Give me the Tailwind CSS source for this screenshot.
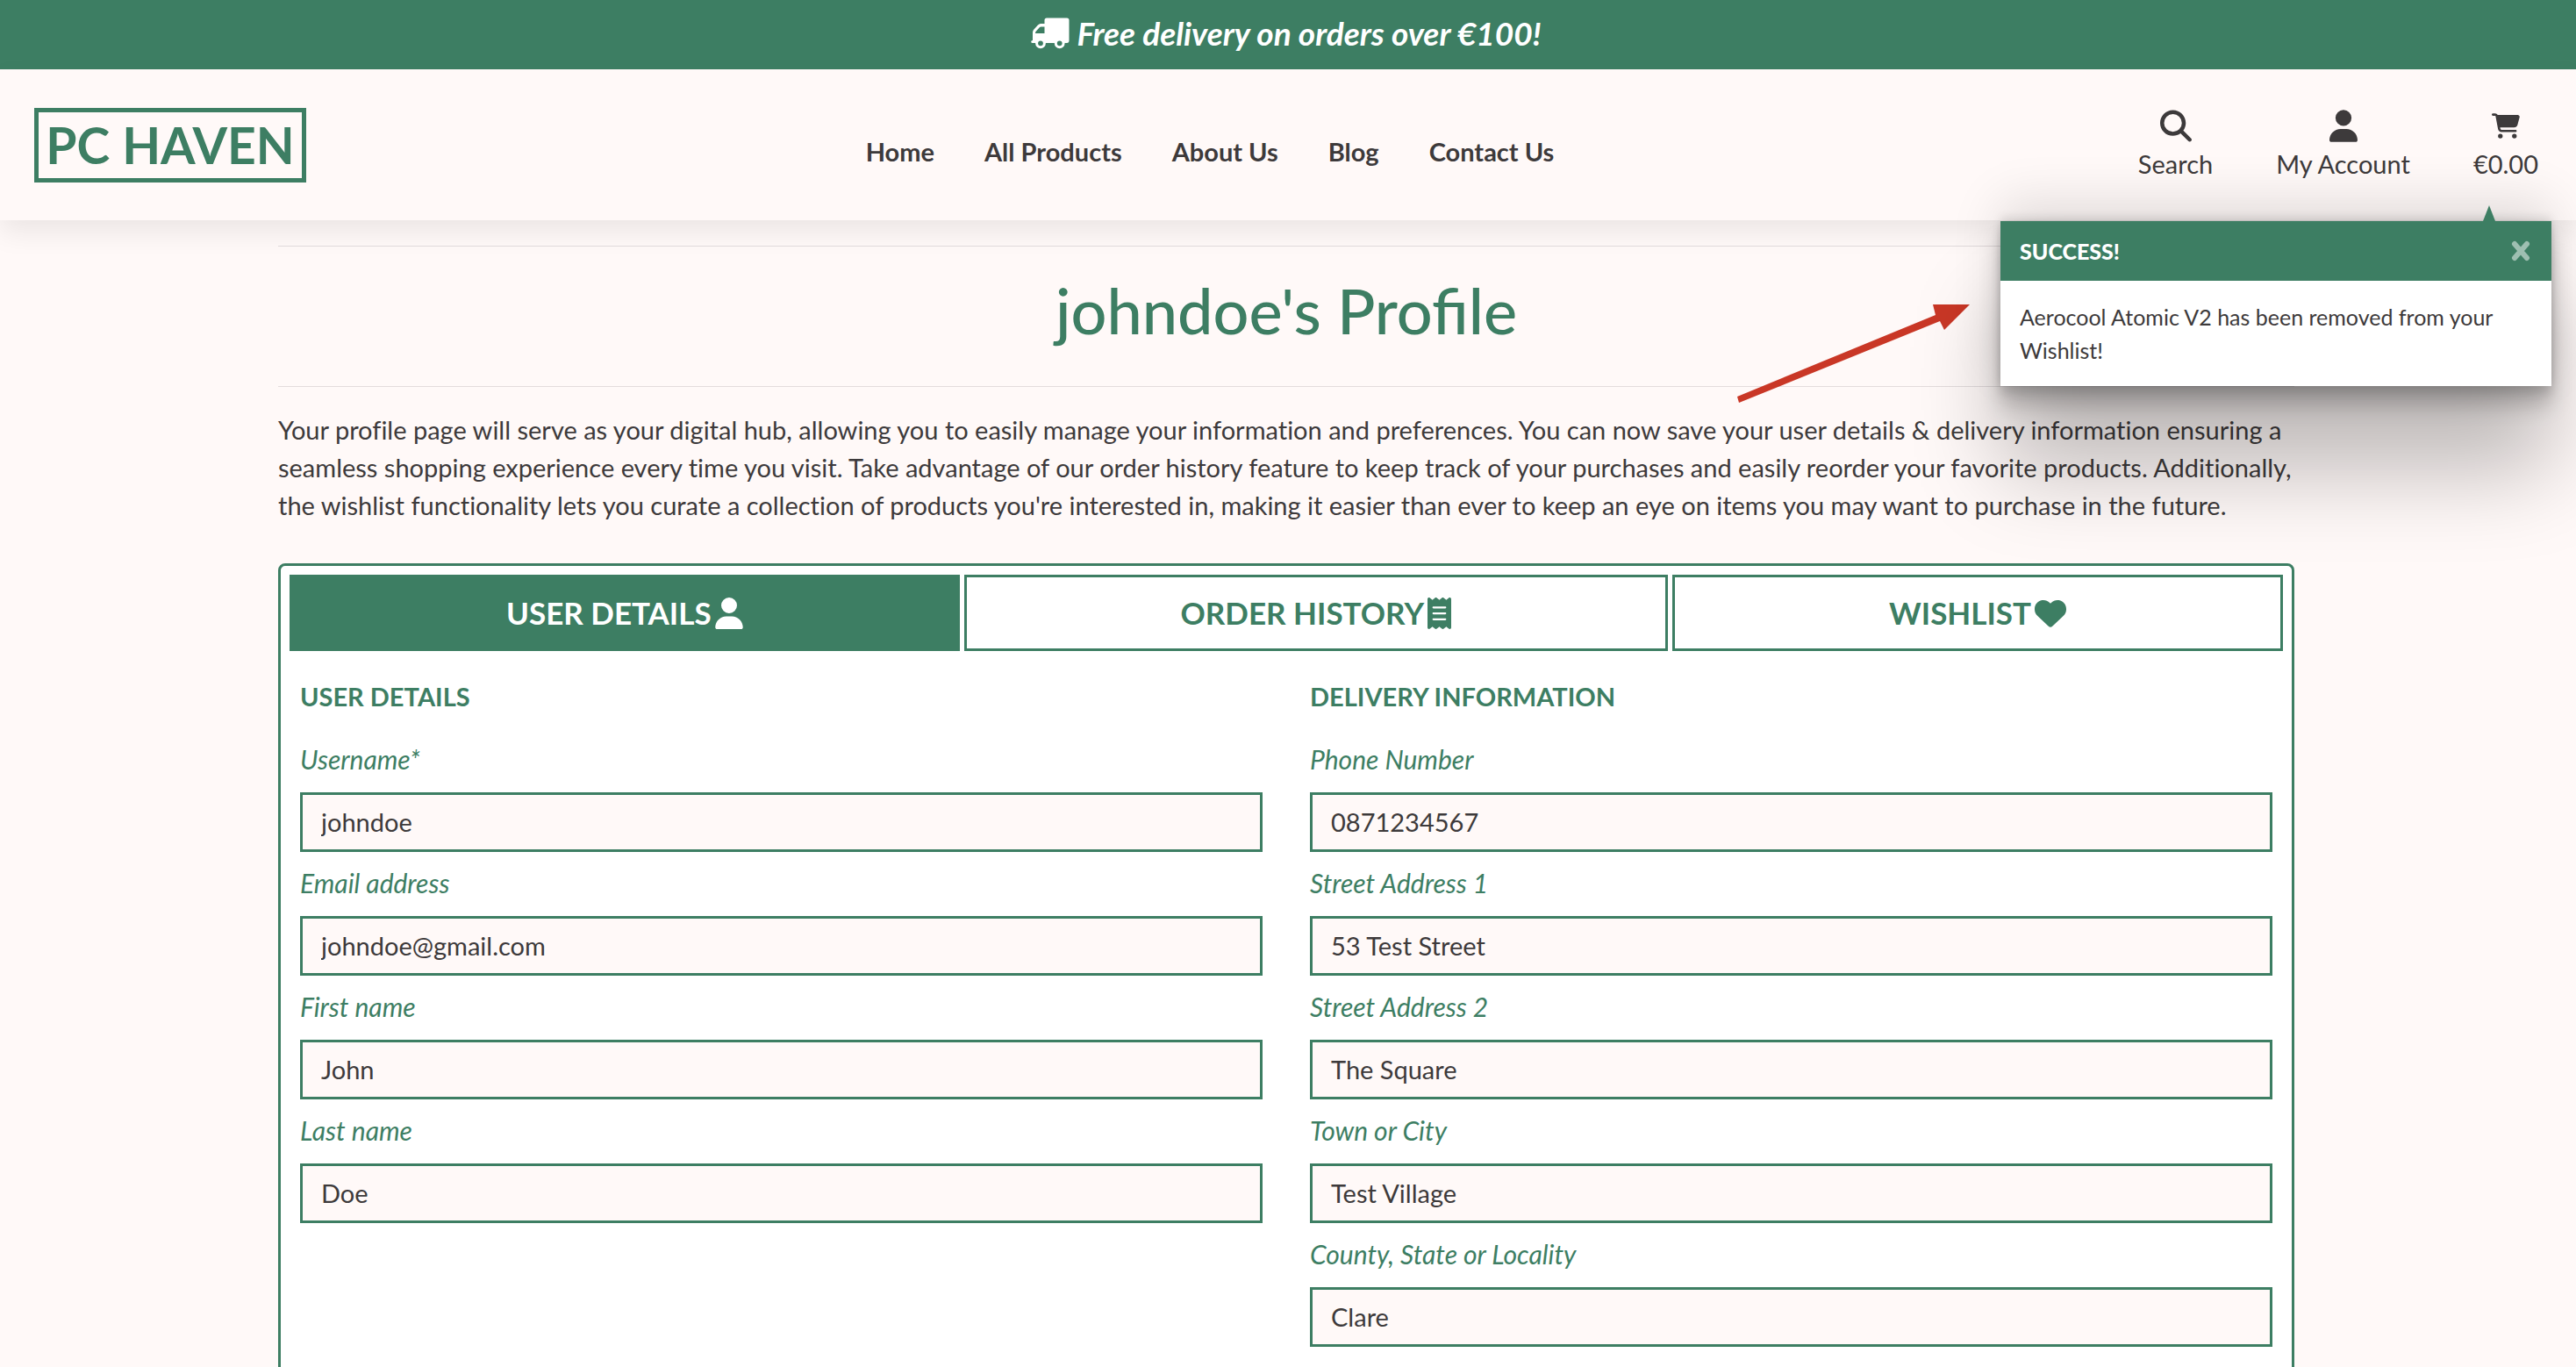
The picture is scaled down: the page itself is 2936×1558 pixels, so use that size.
<!DOCTYPE html>
<html lang="en">
<head>
<meta charset="utf-8">
<title>PC Haven - Profile</title>
<script src="https://cdn.jsdelivr.net/npm/@tailwindcss/browser@4"></script>
</head>
<body class="relative h-screen overflow-hidden bg-[#fff9f8] font-['Lato',sans-serif] text-[29px] leading-[43px] text-[#3d3a3b]">

<div class="flex h-[79px] items-center justify-center gap-2 bg-[#3d7e63] pb-1 pr-1 text-[37px] font-bold italic text-white">
  <svg class="h-9 w-11" viewBox="0 0 44 36" fill="currentColor" aria-hidden="true"><path fill-rule="evenodd" d="M18 0.500H41Q43.500 0.500 43.500 3V26Q43.500 29 41 29H2Q0.200 29 0.200 27.500Q0.200 26 2 26V17Q2 15.500 3 14L8 8.500Q9.500 7 11 7H15.500V3Q15.500 0.500 18 0.500ZM15.500 10.500H11.500Q10.500 10.500 10 11L5.500 16Q5 17 5 18H15.500Z"/><circle cx="11" cy="29.300" r="4.400" fill="#3d7e63" stroke="currentColor" stroke-width="3"/><circle cx="32.700" cy="29.300" r="4.400" fill="#3d7e63" stroke="currentColor" stroke-width="3"/></svg>
  <p>Free delivery on orders over €100!</p>
</div>

<header class="relative flex h-[172px] items-center justify-between bg-[#fff9f8] pl-[39px] pr-[43px] shadow-[0_14px_29px_rgba(0,0,0,0.08)]">
  <a href="#" class="flex h-[85px] w-[310px] items-center justify-center border-5 border-[#3d7e63] text-[57px] font-bold text-[#3d7e63]">PC HAVEN</a>
  <nav class="absolute inset-x-0 top-0 mx-auto flex h-full w-fit items-center gap-[57px] pt-3.5 pr-[178px] font-bold">
    <a href="#">Home</a>
    <a href="#">All Products</a>
    <a href="#">About Us</a>
    <a href="#">Blog</a>
    <a href="#">Contact Us</a>
  </nav>
  <div class="flex gap-[72px]">
    <a href="#" class="flex flex-col items-center">
      <svg class="h-[43px] w-9 py-[3px]" viewBox="0 0 512 512" fill="currentColor" aria-hidden="true"><path d="M416 208c0 45.900-14.900 88.300-40 122.700L502.600 457.400c12.500 12.500 12.500 32.800 0 45.300s-32.800 12.500-45.300 0L330.700 376c-34.400 25.200-76.800 40-122.700 40C93.100 416 0 322.900 0 208S93.100 0 208 0S416 93.100 416 208zM208 352a144 144 0 1 0 0-288 144 144 0 1 0 0 288z"/></svg>
      <span>Search</span>
    </a>
    <a href="#" class="flex flex-col items-center">
      <svg class="h-[43px] w-8 py-[3px]" viewBox="0 0 448 512" fill="currentColor" aria-hidden="true"><path d="M224 256A128 128 0 1 0 224 0a128 128 0 1 0 0 256zm-45.700 48C79.800 304 0 383.800 0 482.300C0 498.700 13.300 512 29.700 512H418.300c16.400 0 29.700-13.300 29.700-29.700C448 383.800 368.200 304 269.700 304H178.300z"/></svg>
      <span>My Account</span>
    </a>
    <a href="#" class="flex flex-col items-center">
      <svg class="h-[43px] w-8 py-[3px]" viewBox="0 0 576 512" fill="currentColor" aria-hidden="true"><path d="M0 24C0 10.700 10.700 0 24 0H69.500c22 0 41.500 12.800 50.600 32h411c26.300 0 45.500 25 38.600 50.400l-41 152.300c-8.500 31.400-37 53.300-69.500 53.300H170.700l5.400 28.500c2.200 11.300 12.100 19.500 23.600 19.500H488c13.300 0 24 10.700 24 24s-10.700 24-24 24H199.700c-34.600 0-64.300-24.600-70.700-58.500L77.400 54.500c-.7-3.800-4-6.500-7.900-6.500H24C10.700 48 0 37.300 0 24zM128 464a48 48 0 1 1 96 0 48 48 0 1 1 -96 0zm336-48a48 48 0 1 1 0 96 48 48 0 1 1 0-96z"/></svg>
      <span>€0.00</span>
    </a>
  </div>
</header>

<main class="pr-1 pt-[29px]">
 <div class="mx-auto w-[2298px] max-w-full">
  <h1 class="flex h-[161px] items-center justify-center border-y border-[#e3dcdd] pb-4 text-[72px] font-medium leading-[86px] text-[#3d7e63]">johndoe's Profile</h1>
  <p class="pt-[27px] [font-variant-ligatures:none]">Your profile page will serve as your digital hub, allowing you to easily manage your information and preferences. You can now save your user details &amp; delivery information ensuring a seamless shopping experience every time you visit. Take advantage of our order history feature to keep track of your purchases and easily reorder your favorite products. Additionally, the wishlist functionality lets you curate a collection of products you're interested in, making it easier than ever to keep an eye on items you may want to purchase in the future.</p>

  <section class="mt-[45px] rounded-lg border-3 border-[#3d7e63] bg-white p-[10px]">
    <div class="flex gap-[5px] text-[35px] font-bold text-[#3d7e63]">
      <button class="flex h-[87px] flex-auto items-center justify-center gap-1 border-3 border-[#3d7e63] bg-[#3d7e63] text-white">USER DETAILS
        <svg class="h-9 w-8" viewBox="0 0 448 512" fill="currentColor" aria-hidden="true"><path d="M224 256A128 128 0 1 0 224 0a128 128 0 1 0 0 256zm-45.700 48C79.800 304 0 383.800 0 482.300C0 498.700 13.300 512 29.700 512H418.300c16.400 0 29.700-13.300 29.700-29.700C448 383.800 368.200 304 269.700 304H178.300z"/></svg></button>
      <button class="flex h-[87px] flex-auto items-center justify-center gap-1 border-3 border-[#3d7e63]">ORDER HISTORY
        <svg class="h-9 w-[27px]" viewBox="0 0 384 512" fill="currentColor" aria-hidden="true"><path d="M14 2.200C22.500-1.700 32.500-.3 39.600 5.800L80 40.400 120.400 5.800c9-7.700 22.300-7.700 31.200 0L192 40.400 232.400 5.800c9-7.700 22.300-7.700 31.200 0L304 40.400 344.400 5.800c7.100-6.100 17.100-7.500 25.600-3.600s14 12.400 14 21.800V488c0 9.400-5.500 17.900-14 21.800s-18.500 2.500-25.600-3.600L304 471.600l-40.400 34.600c-9 7.700-22.300 7.700-31.200 0L192 471.600l-40.400 34.600c-9 7.700-22.300 7.700-31.200 0L80 471.600 39.600 506.200c-7.100 6.100-17.100 7.500-25.600 3.600S0 497.400 0 488V24C0 14.600 5.500 6.100 14 2.200zM96 144c-8.800 0-16 7.200-16 16s7.200 16 16 16H288c8.800 0 16-7.200 16-16s-7.200-16-16-16H96zM80 352c0 8.800 7.200 16 16 16H288c8.800 0 16-7.200 16-16s-7.200-16-16-16H96c-8.800 0-16 7.200-16 16zM96 240c-8.800 0-16 7.200-16 16s7.200 16 16 16H288c8.800 0 16-7.200 16-16s-7.200-16-16-16H96z"/></svg></button>
      <button class="flex h-[87px] flex-auto items-center justify-center gap-1 border-3 border-[#3d7e63]">WISHLIST
        <svg class="size-9" viewBox="0 0 512 512" fill="currentColor" aria-hidden="true"><path d="M47.600 300.400L228.300 469.100c7.500 7 17.400 10.900 27.700 10.900s20.200-3.900 27.700-10.900L464.400 300.400c30.400-28.300 47.600-68 47.600-109.500v-5.800c0-69.900-50.500-129.500-119.400-141C347 36.500 300.600 51.400 268 84L256 96 244 84c-32.600-32.600-79-47.500-124.600-39.900C50.500 55.600 0 115.200 0 185.100v5.800c0 41.500 17.200 81.200 47.600 109.500z"/></svg></button>
    </div>
    <form class="grid grid-cols-2 gap-x-[54px] px-3 pt-[30px] text-[#3d7e63]">
      <div class="flex flex-col">
        <h2 class="mb-[29px] font-bold">USER DETAILS</h2>
        <label for="username" class="mb-4 text-[30px] italic">Username*</label>
        <input id="username" value="johndoe" class="mb-3.5 h-[68px] w-full border-3 border-[#3d7e63] bg-[#fff9f8] px-[21px] pb-0.5 text-[#3d3a3b]">
        <label for="email" class="mb-4 text-[30px] italic">Email address</label>
        <input id="email" value="johndoe@gmail.com" class="mb-3.5 h-[68px] w-full border-3 border-[#3d7e63] bg-[#fff9f8] px-[21px] pb-0.5 text-[#3d3a3b]">
        <label for="first" class="mb-4 text-[30px] italic">First name</label>
        <input id="first" value="John" class="mb-3.5 h-[68px] w-full border-3 border-[#3d7e63] bg-[#fff9f8] px-[21px] pb-0.5 text-[#3d3a3b]">
        <label for="last" class="mb-4 text-[30px] italic">Last name</label>
        <input id="last" value="Doe" class="mb-3.5 h-[68px] w-full border-3 border-[#3d7e63] bg-[#fff9f8] px-[21px] pb-0.5 text-[#3d3a3b]">
      </div>
      <div class="flex flex-col">
        <h2 class="mb-[29px] font-bold">DELIVERY INFORMATION</h2>
        <label for="phone" class="mb-4 text-[30px] italic">Phone Number</label>
        <input id="phone" value="0871234567" class="mb-3.5 h-[68px] w-full border-3 border-[#3d7e63] bg-[#fff9f8] px-[21px] pb-0.5 text-[#3d3a3b]">
        <label for="street1" class="mb-4 text-[30px] italic">Street Address 1</label>
        <input id="street1" value="53 Test Street" class="mb-3.5 h-[68px] w-full border-3 border-[#3d7e63] bg-[#fff9f8] px-[21px] pb-0.5 text-[#3d3a3b]">
        <label for="street2" class="mb-4 text-[30px] italic">Street Address 2</label>
        <input id="street2" value="The Square" class="mb-3.5 h-[68px] w-full border-3 border-[#3d7e63] bg-[#fff9f8] px-[21px] pb-0.5 text-[#3d3a3b]">
        <label for="town" class="mb-4 text-[30px] italic">Town or City</label>
        <input id="town" value="Test Village" class="mb-3.5 h-[68px] w-full border-3 border-[#3d7e63] bg-[#fff9f8] px-[21px] pb-0.5 text-[#3d3a3b]">
        <label for="county" class="mb-4 text-[30px] italic">County, State or Locality</label>
        <input id="county" value="Clare" class="mb-3.5 h-[68px] w-full border-3 border-[#3d7e63] bg-[#fff9f8] px-[21px] pb-0.5 text-[#3d3a3b]">
        <label for="postcode" class="mb-4 text-[30px] italic">Eircode / Postcode</label>
        <input id="postcode" value="" class="mb-3.5 h-[68px] w-full border-3 border-[#3d7e63] bg-[#fff9f8] px-[21px] pb-0.5 text-[#3d3a3b]">
      </div>
    </form>
  </section>
 </div>
</main>

<svg class="absolute right-[689px] top-[344px] h-[116px] w-[268px]" viewBox="0 0 268 116" fill="#c93726" aria-hidden="true"><path d="M1 108L227 15L224 3L266 3L237 32L232 22L3 115Z"/></svg>

<div role="alert" class="absolute right-7 top-[252px] w-[628px] bg-white text-[25px] leading-[38px] shadow-[0_97px_99px_rgba(0,0,0,0.25),0_-22px_54px_rgba(0,0,0,0.12),0_7px_11px_rgba(0,0,0,0.12),0_22px_23px_rgba(0,0,0,0.2),0_-5px_9px_rgba(0,0,0,0.09)]">
  <svg class="absolute bottom-full right-16 h-[18px] w-[14px]" viewBox="0 0 14 18" fill="#3d7e63" aria-hidden="true"><path d="M7 0L14 18H0Z"/></svg>
  <div class="flex h-[68px] items-center justify-between bg-[#3d7e63] pl-[22px] pr-6 font-bold text-white">
    <strong>SUCCESS!</strong>
    <button aria-label="Close" class="text-white/50"><svg class="h-6 w-[22px]" viewBox="0 0 22 24" fill="none" stroke="currentColor" stroke-width="6" stroke-linecap="round" aria-hidden="true"><path d="M4 4L18 20M18 4L4 20"/></svg></button>
  </div>
  <p class="p-[22px]">Aerocool Atomic V2 has been removed from your Wishlist!</p>
</div>
</body>
</html>
